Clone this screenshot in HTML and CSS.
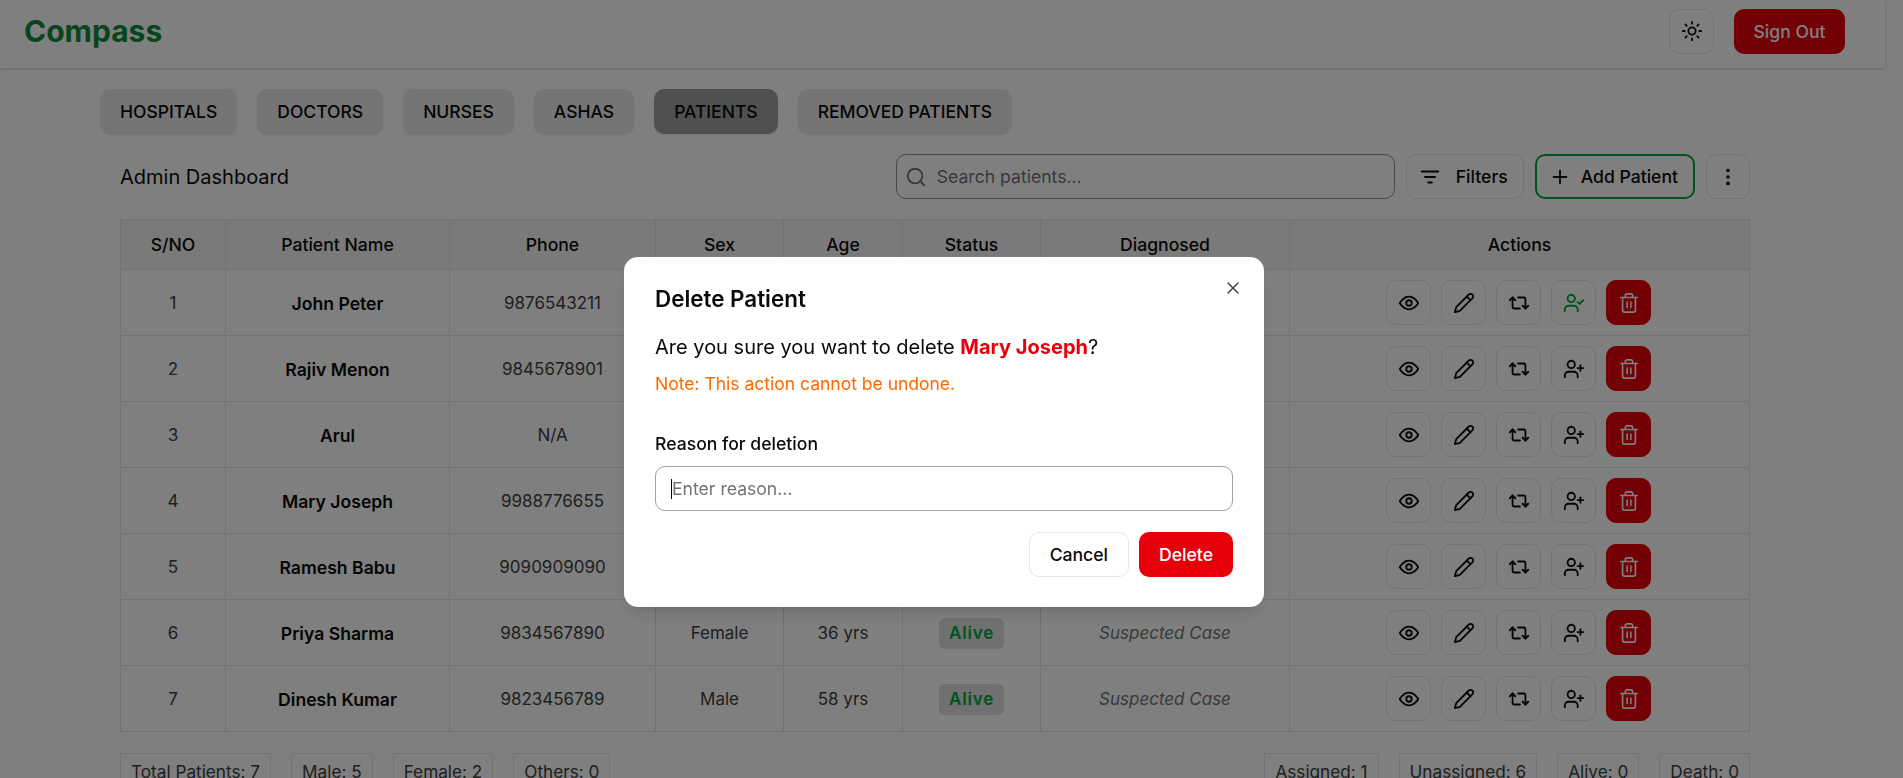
FILE: index.html

```html
<!doctype html>
<html lang="en">

<head>
	<meta charset="utf-8">
	<title>Compass - Admin Dashboard</title>
	<link rel="stylesheet" href="styles.css">
</head>

<body>
	<svg class="sprites" width="0" height="0">
		<symbol id="i-eye" viewBox="0 0 24 24">
			<path d="M2 12s3.5-7 10-7 10 7 10 7-3.5 7-10 7-10-7-10-7z" />
			<circle cx="12" cy="12" r="3" />
		</symbol>
		<symbol id="i-pen" viewBox="0 0 24 24">
			<path d="M17 3a2.85 2.83 0 1 1 4 4L7.5 20.5 2 22l1.5-5.5z" />
			<path d="m15 5 4 4" />
		</symbol>
		<symbol id="i-repeat" viewBox="0 0 24 24">
			<path d="m2 9 3-3 3 3" />
			<path d="M13 18H7a2 2 0 0 1-2-2V6" />
			<path d="m22 15-3 3-3-3" />
			<path d="M11 6h6a2 2 0 0 1 2 2v10" />
		</symbol>
		<symbol id="i-user-plus" viewBox="0 0 24 24">
			<path d="M16 21v-2a4 4 0 0 0-4-4H6a4 4 0 0 0-4 4v2" />
			<circle cx="9" cy="7" r="4" />
			<path d="M19 8v6" />
			<path d="M22 11h-6" />
		</symbol>
		<symbol id="i-user-check" viewBox="0 0 24 24">
			<path d="M16 21v-2a4 4 0 0 0-4-4H6a4 4 0 0 0-4 4v2" />
			<circle cx="9" cy="7" r="4" />
			<path d="m16 11 2 2 4-4" />
		</symbol>
		<symbol id="i-trash" viewBox="0 0 24 24">
			<path d="M3 6h18" />
			<path d="M19 6v14a2 2 0 0 1-2 2H7a2 2 0 0 1-2-2V6" />
			<path d="M8 6V4a2 2 0 0 1 2-2h4a2 2 0 0 1 2 2v2" />
			<path d="M10 11v6" />
			<path d="M14 11v6" />
		</symbol>
	</svg>

	<header class="navbar">
		<div class="brand">Compass</div>
		<div class="navbar-right">
			<button class="icon-btn theme-btn">
				<svg class="icon" viewBox="0 0 24 24">
					<circle cx="12" cy="12" r="4" />
					<path d="M12 2v2M12 20v2M4.9 4.9l1.4 1.4M17.7 17.7l1.4 1.4M2 12h2M20 12h2M6.3 17.7l-1.4 1.4M19.1 4.9l-1.4 1.4" />
				</svg>
			</button>
			<button class="sign-out">Sign Out</button>
		</div>
	</header>

	<main class="content">
		<nav class="tabs">
			<button class="tab">HOSPITALS</button>
			<button class="tab">DOCTORS</button>
			<button class="tab">NURSES</button>
			<button class="tab">ASHAS</button>
			<button class="tab active">PATIENTS</button>
			<button class="tab">REMOVED PATIENTS</button>
		</nav>

		<section class="panel">
			<div class="toolbar">
				<h2 class="page-title">Admin Dashboard</h2>
				<div class="toolbar-right">
					<label class="search">
						<svg class="icon" viewBox="0 0 24 24">
							<circle cx="11" cy="11" r="8" />
							<path d="m21 21-4.3-4.3" />
						</svg>
						<input type="text" placeholder="Search patients...">
					</label>
					<button class="tool-btn filter-btn">
						<svg class="icon" viewBox="0 0 24 24">
							<path d="M3 6h18M6.5 12h11M10 18h4" />
						</svg>
						Filters
					</button>
					<button class="tool-btn add-btn">
						<svg class="icon" viewBox="0 0 24 24">
							<path d="M5 12h14M12 5v14" />
						</svg>
						Add Patient
					</button>
					<button class="tool-btn more-btn">
						<svg class="icon" viewBox="0 0 24 24">
							<circle cx="12" cy="5" r="1" />
							<circle cx="12" cy="12" r="1" />
							<circle cx="12" cy="19" r="1" />
						</svg>
					</button>
				</div>
			</div>

			<table class="patients">
				<colgroup>
					<col class="c-sno">
					<col class="c-name">
					<col class="c-phone">
					<col class="c-sex">
					<col class="c-age">
					<col class="c-status">
					<col class="c-diag">
					<col class="c-actions">
				</colgroup>
				<thead>
					<tr>
						<th>S/NO</th>
						<th>Patient Name</th>
						<th>Phone</th>
						<th>Sex</th>
						<th>Age</th>
						<th>Status</th>
						<th>Diagnosed</th>
						<th>Actions</th>
					</tr>
				</thead>
				<tbody>
					<tr>
						<td>1</td>
						<td class="name">John Peter</td>
						<td>9876543211</td>
						<td>Male</td>
						<td>45 yrs</td>
						<td><span class="badge">Alive</span></td>
						<td class="diag">Suspected Case</td>
						<td>
							<div class="actions">
								<button class="act"><svg class="icon"><use href="#i-eye" /></svg></button>
								<button class="act"><svg class="icon"><use href="#i-pen" /></svg></button>
								<button class="act"><svg class="icon"><use href="#i-repeat" /></svg></button>
								<button class="act assigned"><svg class="icon"><use href="#i-user-check" /></svg></button>
								<button class="act del"><svg class="icon"><use href="#i-trash" /></svg></button>
							</div>
						</td>
					</tr>
					<tr>
						<td>2</td>
						<td class="name">Rajiv Menon</td>
						<td>9845678901</td>
						<td>Male</td>
						<td>52 yrs</td>
						<td><span class="badge">Alive</span></td>
						<td class="diag">Suspected Case</td>
						<td>
							<div class="actions">
								<button class="act"><svg class="icon"><use href="#i-eye" /></svg></button>
								<button class="act"><svg class="icon"><use href="#i-pen" /></svg></button>
								<button class="act"><svg class="icon"><use href="#i-repeat" /></svg></button>
								<button class="act"><svg class="icon"><use href="#i-user-plus" /></svg></button>
								<button class="act del"><svg class="icon"><use href="#i-trash" /></svg></button>
							</div>
						</td>
					</tr>
					<tr>
						<td>3</td>
						<td class="name">Arul</td>
						<td>N/A</td>
						<td>Male</td>
						<td>40 yrs</td>
						<td><span class="badge">Alive</span></td>
						<td class="diag">Suspected Case</td>
						<td>
							<div class="actions">
								<button class="act"><svg class="icon"><use href="#i-eye" /></svg></button>
								<button class="act"><svg class="icon"><use href="#i-pen" /></svg></button>
								<button class="act"><svg class="icon"><use href="#i-repeat" /></svg></button>
								<button class="act"><svg class="icon"><use href="#i-user-plus" /></svg></button>
								<button class="act del"><svg class="icon"><use href="#i-trash" /></svg></button>
							</div>
						</td>
					</tr>
					<tr>
						<td>4</td>
						<td class="name">Mary Joseph</td>
						<td>9988776655</td>
						<td>Female</td>
						<td>47 yrs</td>
						<td><span class="badge">Alive</span></td>
						<td class="diag">Suspected Case</td>
						<td>
							<div class="actions">
								<button class="act"><svg class="icon"><use href="#i-eye" /></svg></button>
								<button class="act"><svg class="icon"><use href="#i-pen" /></svg></button>
								<button class="act"><svg class="icon"><use href="#i-repeat" /></svg></button>
								<button class="act"><svg class="icon"><use href="#i-user-plus" /></svg></button>
								<button class="act del"><svg class="icon"><use href="#i-trash" /></svg></button>
							</div>
						</td>
					</tr>
					<tr>
						<td>5</td>
						<td class="name">Ramesh Babu</td>
						<td>9090909090</td>
						<td>Male</td>
						<td>60 yrs</td>
						<td><span class="badge">Alive</span></td>
						<td class="diag">Suspected Case</td>
						<td>
							<div class="actions">
								<button class="act"><svg class="icon"><use href="#i-eye" /></svg></button>
								<button class="act"><svg class="icon"><use href="#i-pen" /></svg></button>
								<button class="act"><svg class="icon"><use href="#i-repeat" /></svg></button>
								<button class="act"><svg class="icon"><use href="#i-user-plus" /></svg></button>
								<button class="act del"><svg class="icon"><use href="#i-trash" /></svg></button>
							</div>
						</td>
					</tr>
					<tr>
						<td>6</td>
						<td class="name">Priya Sharma</td>
						<td>9834567890</td>
						<td>Female</td>
						<td>36 yrs</td>
						<td><span class="badge">Alive</span></td>
						<td class="diag">Suspected Case</td>
						<td>
							<div class="actions">
								<button class="act"><svg class="icon"><use href="#i-eye" /></svg></button>
								<button class="act"><svg class="icon"><use href="#i-pen" /></svg></button>
								<button class="act"><svg class="icon"><use href="#i-repeat" /></svg></button>
								<button class="act"><svg class="icon"><use href="#i-user-plus" /></svg></button>
								<button class="act del"><svg class="icon"><use href="#i-trash" /></svg></button>
							</div>
						</td>
					</tr>
					<tr>
						<td>7</td>
						<td class="name">Dinesh Kumar</td>
						<td>9823456789</td>
						<td>Male</td>
						<td>58 yrs</td>
						<td><span class="badge">Alive</span></td>
						<td class="diag">Suspected Case</td>
						<td>
							<div class="actions">
								<button class="act"><svg class="icon"><use href="#i-eye" /></svg></button>
								<button class="act"><svg class="icon"><use href="#i-pen" /></svg></button>
								<button class="act"><svg class="icon"><use href="#i-repeat" /></svg></button>
								<button class="act"><svg class="icon"><use href="#i-user-plus" /></svg></button>
								<button class="act del"><svg class="icon"><use href="#i-trash" /></svg></button>
							</div>
						</td>
					</tr>
				</tbody>
			</table>

			<div class="totals">
				<div class="totals-group">
					<span class="stat">Total Patients: 7</span>
					<span class="stat">Male: 5</span>
					<span class="stat">Female: 2</span>
					<span class="stat">Others: 0</span>
				</div>
				<div class="totals-group">
					<span class="stat">Assigned: 1</span>
					<span class="stat">Unassigned: 6</span>
					<span class="stat">Alive: 0</span>
					<span class="stat">Death: 0</span>
				</div>
			</div>
		</section>
	</main>

	<div class="overlay">
		<div class="modal">
			<button class="modal-close">
				<svg class="icon" viewBox="0 0 24 24">
					<path d="M18 6 6 18M6 6l12 12" />
				</svg>
			</button>
			<h3 class="modal-title">Delete Patient</h3>
			<p class="modal-text">Are you sure you want to delete <strong>Mary Joseph</strong>?</p>
			<p class="modal-note">Note: This action cannot be undone.</p>
			<label class="reason-label" for="reason">Reason for deletion</label>
			<div class="reason-box">
				<span class="caret"></span>
				<input id="reason" type="text" placeholder="Enter reason...">
			</div>
			<div class="modal-actions">
				<button class="btn-cancel">Cancel</button>
				<button class="btn-delete">Delete</button>
			</div>
		</div>
	</div>
</body>

</html>
```

FILE: styles.css

```css
html,
body {
	margin: 0;
	padding: 0;
	height: 778px;
	overflow: hidden;
	background: #fff;
	color: #0a0a0a;
	font-family: Inter, "Liberation Sans", sans-serif;
}
button,
input {
	font-family: inherit;
}
.sprites {
	position: absolute;
}
.icon {
	width: 22px;
	height: 22px;
	fill: none;
	stroke: currentColor;
	stroke-width: 2;
	stroke-linecap: round;
	stroke-linejoin: round;
	flex: none;
}

/* top bar */
.navbar {
	width: 1885px;
	height: 68px;
	box-sizing: border-box;
	padding: 0 40px 0 24px;
	display: flex;
	align-items: center;
	justify-content: space-between;
	background: #fff;
	box-shadow: 0 1px 3px rgba(0, 0, 0, .2);
}
.brand {
	font-size: 30px;
	line-height: 36px;
	font-weight: 700;
	color: #0e8a3c;
	margin-top: -6px;
}
.navbar-right {
	display: flex;
	align-items: center;
	gap: 20px;
	margin-top: -6px;
}
.icon-btn {
	width: 45px;
	height: 45px;
	display: flex;
	align-items: center;
	justify-content: center;
	padding: 0;
	background: #fff;
	border: 1px solid #e5e5e5;
	border-radius: 10px;
	color: #0a0a0a;
}
.sign-out {
	width: 111px;
	height: 45px;
	background: #e7000b;
	color: #fff;
	border: 0;
	border-radius: 10px;
	font-size: 17.6px;
	font-weight: 500;
}

/* tabs */
.content {
	width: 1885px;
	box-sizing: border-box;
	padding: 21px 135px 0 100px;
}
.tabs {
	display: flex;
	gap: 20px;
}
.tab {
	height: 45px;
	padding: 0 20px;
	background: #ebebeb;
	color: #0a0a0a;
	border: 0;
	border-radius: 10px;
	font-size: 17.5px;
	font-weight: 500;
	box-shadow: 0 1px 2px rgba(0, 0, 0, .1);
}
.tab.active {
	background: #a1a1a1;
}

/* toolbar */
.panel {
	padding-left: 20px;
}
.toolbar {
	display: flex;
	align-items: center;
	justify-content: space-between;
	margin-top: 20px;
}
.page-title {
	margin: 0;
	font-size: 20px;
	font-weight: 400;
}
.toolbar-right {
	display: flex;
	align-items: center;
	gap: 11px;
}
.search {
	width: 499px;
	height: 45px;
	box-sizing: border-box;
	display: flex;
	align-items: center;
	gap: 10px;
	padding: 0 8px;
	border: 1px solid #8f8f8f;
	border-radius: 10px;
	color: #737373;
}
.search input {
	flex: 1;
	min-width: 0;
	border: 0;
	outline: 0;
	padding: 0;
	background: transparent;
	font-size: 17.6px;
}
.search input::placeholder {
	color: #737373;
}
.tool-btn {
	height: 45px;
	box-sizing: border-box;
	display: flex;
	align-items: center;
	padding: 0 15px 0 12px;
	background: #fff;
	border: 1px solid #e5e5e5;
	border-radius: 10px;
	color: #0a0a0a;
	font-size: 17.6px;
	font-weight: 500;
}
.filter-btn {
	gap: 15px;
}
.add-btn {
	gap: 10px;
	border: 2px solid #00a63e;
}
.more-btn {
	width: 44px;
	padding: 0;
	justify-content: center;
}

/* patient table */
.patients {
	width: 1630px;
	margin-top: 20px;
	border-collapse: collapse;
	table-layout: fixed;
	font-size: 17px;
}
.c-sno { width: 105px; }
.c-name { width: 224px; }
.c-phone { width: 206px; }
.c-sex { width: 128px; }
.c-age { width: 119px; }
.c-status { width: 138px; }
.c-diag { width: 249px; }
.patients th,
.patients td {
	border: 1px solid #e5e5e5;
	text-align: center;
	padding: 0;
}
.patients th {
	height: 49px;
	background: #f5f5f5;
	font-size: 17.6px;
	font-weight: 500;
}
.patients td {
	height: 64px;
	padding-top: 1px;
	color: #404040;
}
.patients td:last-child {
	height: 65px;
	padding-top: 0;
}
.patients td.name {
	font-size: 17.6px;
	font-weight: 600;
	color: #0a0a0a;
}
.patients td.diag {
	font-style: italic;
	color: #737373;
}
.badge {
	display: inline-block;
	padding: 5px 10px;
	background: #e0e0e0;
	border-radius: 6px;
	color: #00a63e;
	font-weight: 600;
	line-height: 21px;
	letter-spacing: .8px;
}
.actions {
	display: flex;
	justify-content: center;
	gap: 10.5px;
	padding-right: 2px;
}
.act {
	width: 44.5px;
	height: 45px;
	display: flex;
	align-items: center;
	justify-content: center;
	padding: 0;
	background: #fff;
	border: 1px solid #e5e5e5;
	border-radius: 10px;
	color: #0a0a0a;
}
.act.assigned {
	color: #00a63e;
}
.act.del {
	background: #e7000b;
	border-color: #e7000b;
	color: #fff;
}
.act.del .icon {
	stroke-width: 1.75;
}
.totals {
	display: flex;
	justify-content: space-between;
	margin-top: 21px;
}
.totals-group {
	display: flex;
	gap: 20px;
}
.stat {
	padding: 6px 10px;
	border: 1px solid #e5e5e5;
	font-size: 17.2px;
	line-height: 24px;
	color: #404040;
}

/* delete dialog */
.overlay {
	position: fixed;
	inset: 0;
	background: rgba(0, 0, 0, .5);
}
.modal {
	position: absolute;
	left: 624px;
	top: 257px;
	width: 640px;
	height: 350px;
	box-sizing: border-box;
	padding: 28px 31px;
	background: #fff;
	border-radius: 14px;
	box-shadow: 0 10px 15px -3px rgba(0, 0, 0, .1), 0 4px 6px -4px rgba(0, 0, 0, .1);
}
.modal-close {
	position: absolute;
	top: 21px;
	right: 21px;
	width: 20px;
	height: 20px;
	padding: 0;
	background: none;
	border: 0;
	color: #404040;
}
.modal-close .icon {
	display: block;
	width: 20px;
	height: 20px;
	stroke-width: 1.75;
}
.modal-title {
	margin: 0;
	font-size: 22.4px;
	line-height: 28px;
	font-weight: 600;
}
.modal-text {
	margin: 20px 0 0;
	font-size: 20px;
	line-height: 28px;
}
.modal-text strong {
	color: #e7000b;
	font-weight: 700;
}
.modal-note {
	margin: 11px 0 0;
	font-size: 17.5px;
	line-height: 24px;
	color: #ff6900;
}
.reason-label {
	display: block;
	margin-top: 36px;
	font-size: 17.6px;
	line-height: 24px;
	font-weight: 500;
}
.reason-box {
	display: flex;
	align-items: center;
	height: 45px;
	box-sizing: border-box;
	margin-top: 10px;
	padding: 0 15px;
	border: 1px solid #a1a1a1;
	border-radius: 10px;
}
.caret {
	width: 1px;
	height: 20px;
	background: #0a0a0a;
}
.reason-box input {
	flex: 1;
	min-width: 0;
	border: 0;
	outline: 0;
	padding: 0;
	font-size: 17.6px;
}
.reason-box input::placeholder {
	color: #737373;
}
.modal-actions {
	display: flex;
	justify-content: flex-end;
	gap: 10px;
	margin-top: 21px;
}
.btn-cancel,
.btn-delete {
	height: 45px;
	padding: 0 20px;
	border-radius: 10px;
	font-size: 17.6px;
	font-weight: 500;
}
.btn-cancel {
	background: #fff;
	border: 1px solid #e5e5e5;
	color: #0a0a0a;
}
.btn-delete {
	background: #e7000b;
	border: 0;
	color: #fff;
}
```
